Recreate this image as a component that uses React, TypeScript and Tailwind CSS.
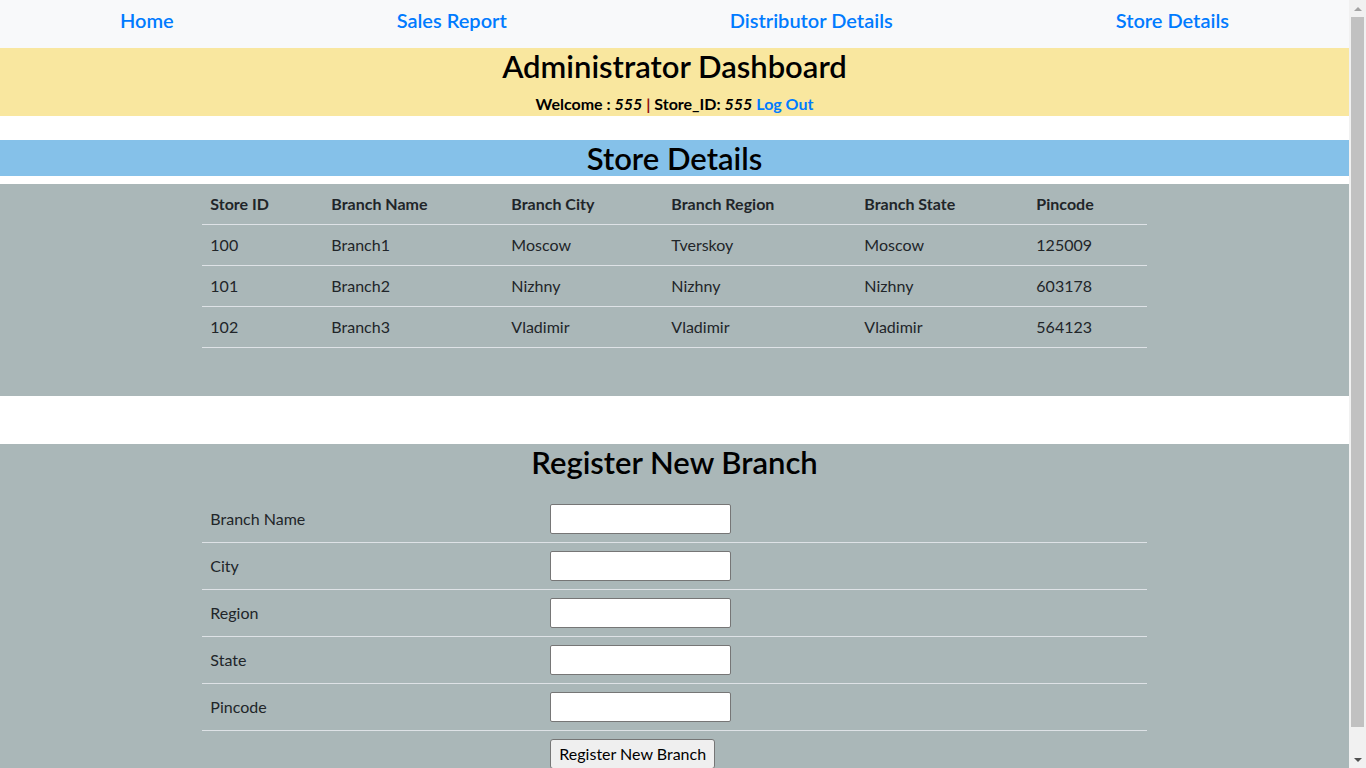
const stores = [
  { id: "100", name: "Branch1", city: "Moscow", region: "Tverskoy", state: "Moscow", pin: "125009" },
  { id: "101", name: "Branch2", city: "Nizhny", region: "Nizhny", state: "Nizhny", pin: "603178" },
  { id: "102", name: "Branch3", city: "Vladimir", region: "Vladimir", state: "Vladimir", pin: "564123" },
];

const fields = ["Branch Name", "City", "Region", "State", "Pincode"];

const navLinks = ["Home", "Sales Report", "Distributor Details", "Store Details"];

function FakeScrollbar() {
  // the reference shows a classic (non-overlay) scrollbar on the right
  return (
    <div className="fixed right-0 top-0 flex h-screen w-[17px] flex-col items-center bg-[#f1f1f1]">
      <div className="flex h-[17px] w-full items-center justify-center">
        <div className="h-0 w-0 border-x-[4px] border-b-[4px] border-x-transparent border-b-[#a3a3a3]" />
      </div>
      <div className="h-[710px] w-[13px] bg-[#c1c1c1]" />
      <div className="flex-1" />
      <div className="flex h-[17px] w-full items-center justify-center">
        <div className="h-0 w-0 border-x-[4px] border-t-[4px] border-x-transparent border-t-[#505050]" />
      </div>
    </div>
  );
}

export default function App() {
  return (
    <div className="min-h-screen bg-white font-['Lato','Liberation_Sans',sans-serif] text-[16px] leading-6 text-[#212529]">
      <div className="mr-[17px]">
        <nav className="flex h-12 items-start justify-between bg-[#f8f9fa] px-[120px] pt-[5px]">
          {navLinks.map((link) => (
            <a key={link} href="#" className="text-[20px] font-semibold leading-[30px] text-[#007bff]">
              {link}
            </a>
          ))}
        </nav>

        <header className="bg-[#f9e79f] text-center text-black">
          <h1 className="mb-[7px] text-[31px] font-semibold leading-[37px]">Administrator Dashboard</h1>
          <p className="font-bold leading-6">
            Welcome : <i>555</i> <span className="text-[#8b1010]">|</span> Store_ID: <i>555</i>{" "}
            <a href="#" className="text-[#007bff]">Log Out</a>
          </p>
        </header>

        <div className="mt-6 bg-[#85c1e9] text-center text-black">
          <h2 className="text-[31px] font-semibold leading-9">Store Details</h2>
        </div>

        <section className="mt-2 bg-[#aab7b8] pb-12">
          <table className="mx-auto w-[70%] table-fixed border-collapse text-left">
            <thead>
              <tr className="border-b border-[#dee2e6]">
                <th className="w-[121px] p-2 font-bold">Store ID</th>
                <th className="w-[180px] p-2 font-bold">Branch Name</th>
                <th className="w-[160px] p-2 font-bold">Branch City</th>
                <th className="w-[193px] p-2 font-bold">Branch Region</th>
                <th className="w-[172px] p-2 font-bold">Branch State</th>
                <th className="p-2 font-bold">Pincode</th>
              </tr>
            </thead>
            <tbody>
              {stores.map((s) => (
                <tr key={s.id} className="border-b border-[#dee2e6]">
                  <td className="p-2">{s.id}</td>
                  <td className="p-2">{s.name}</td>
                  <td className="p-2">{s.city}</td>
                  <td className="p-2">{s.region}</td>
                  <td className="p-2">{s.state}</td>
                  <td className="p-2">{s.pin}</td>
                </tr>
              ))}
            </tbody>
          </table>
        </section>

        <section className="mt-12 bg-[#aab7b8] pb-12">
          <h2 className="mb-[15px] text-center text-[31px] font-semibold leading-[37px] text-black">
            Register New Branch
          </h2>
          <table className="mx-auto w-[70%] table-fixed border-collapse text-left">
            <tbody>
              {fields.map((f) => (
                <tr key={f} className="border-b border-[#dee2e6]">
                  <td className="w-[340px] p-2 align-middle">{f}</td>
                  <td className="p-2">
                    <input
                      type="text"
                      className="block h-[30px] w-[181px] rounded-[2px] border border-[#767676] bg-white px-1"
                    />
                  </td>
                </tr>
              ))}
              <tr>
                <td className="p-2"></td>
                <td className="p-2">
                  <button
                    type="button"
                    className="rounded-[3px] border border-[#767676] bg-[#efefef] px-2 py-[2px] leading-6 text-black"
                  >
                    Register New Branch
                  </button>
                </td>
              </tr>
            </tbody>
          </table>
        </section>
      </div>
      <FakeScrollbar />
    </div>
  );
}
